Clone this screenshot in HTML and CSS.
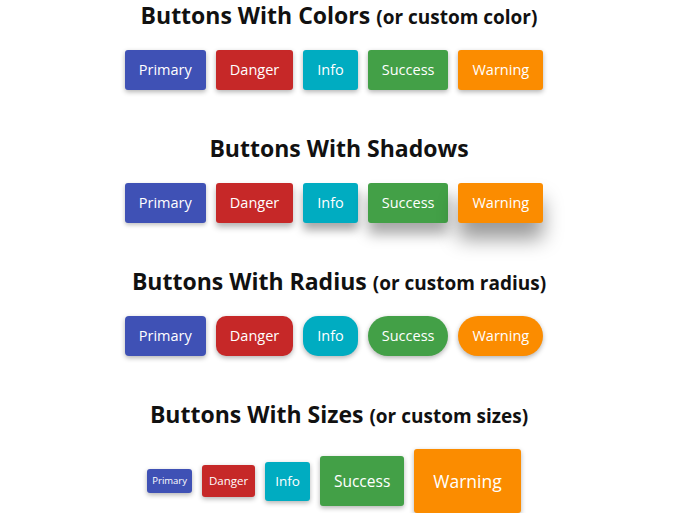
FILE: index.html
```html
<!DOCTYPE html>
<html>
<head>
<meta charset="utf-8">
<link rel="stylesheet" href="styles.css">
</head>
<body>
<main class="page">
  <section class="demo">
    <h2 class="title">Buttons With Colors <small>(or custom color)</small></h2>
    <div class="row">
      <button class="btn primary">Primary</button><button class="btn danger">Danger</button><button class="btn info">Info</button><button class="btn success">Success</button><button class="btn warning">Warning</button>
    </div>
  </section>
  <section class="demo">
    <h2 class="title">Buttons With Shadows</h2>
    <div class="row">
      <button class="btn primary sh1">Primary</button><button class="btn danger sh2">Danger</button><button class="btn info sh3">Info</button><button class="btn success sh4">Success</button><button class="btn warning sh5">Warning</button>
    </div>
  </section>
  <section class="demo">
    <h2 class="title">Buttons With Radius <small>(or custom radius)</small></h2>
    <div class="row">
      <button class="btn primary r1">Primary</button><button class="btn danger r2">Danger</button><button class="btn info r3">Info</button><button class="btn success r4">Success</button><button class="btn warning r5">Warning</button>
    </div>
  </section>
  <section class="demo">
    <h2 class="title">Buttons With Sizes <small>(or custom sizes)</small></h2>
    <div class="row sizes">
      <button class="btn primary xs">Primary</button><button class="btn danger sm">Danger</button><button class="btn info md">Info</button><button class="btn success lg">Success</button><button class="btn warning xl">Warning</button>
    </div>
  </section>
</main>
</body>
</html>
```
FILE: styles.css
```css
html, body {
  margin: 0;
  padding: 0;
  background: #ffffff;
}
body {
  font-family: "Open Sans", "Noto Sans", sans-serif;
  color: #111;
}
.page {
  width: 678px;
  display: flex;
  flex-direction: column;
  gap: 43px;
}
.demo {
  display: flex;
  flex-direction: column;
  align-items: center;
  gap: 20px;
}
.title {
  margin: 0;
  font-size: 23px;
  line-height: 30px;
  font-weight: 700;
  text-align: center;
}
.title small {
  font-size: 19px;
  line-height: 1;
  font-weight: 700;
}
.row {
  display: flex;
  align-items: center;
  justify-content: center;
}
.btn {
  font-family: inherit;
  font-size: 14.5px;
  line-height: 20px;
  padding: 10px 14px;
  margin: 0 10px 0 0;
  border: 0;
  border-radius: 3px;
  color: #fff;
  box-shadow: 0 2px 5px rgba(0, 0, 0, 0.3);
  cursor: pointer;
}
.primary { background: #3f51b5; }
.danger { background: #c62828; }
.info { background: #00acc1; }
.success { background: #43a047; }
.warning { background: #fb8c00; }

.sh1 { box-shadow: 0 2px 4px rgba(0, 0, 0, 0.25); }
.sh2 { box-shadow: 0 4px 6px rgba(0, 0, 0, 0.3); }
.sh3 { box-shadow: 0 7px 10px rgba(0, 0, 0, 0.35); }
.sh4 { box-shadow: 0 11px 14px rgba(0, 0, 0, 0.35); }
.sh5 { box-shadow: 0 16px 20px rgba(0, 0, 0, 0.4); }

.r1 { border-radius: 4px; }
.r2 { border-radius: 10px; }
.r3 { border-radius: 15px; }
.r4 { border-radius: 20px; }
.r5 { border-radius: 25px; }

.xs { font-size: 9.5px; line-height: 14px; padding: 5px 5px; }
.sm { font-size: 11.5px; line-height: 16px; padding: 8px 7px; }
.md { font-size: 13.5px; line-height: 19px; padding: 10px 10px; }
.lg { font-size: 15.5px; line-height: 22px; padding: 14px 14px; }
.xl { font-size: 17.5px; line-height: 24px; padding: 20px 19px; }
```
